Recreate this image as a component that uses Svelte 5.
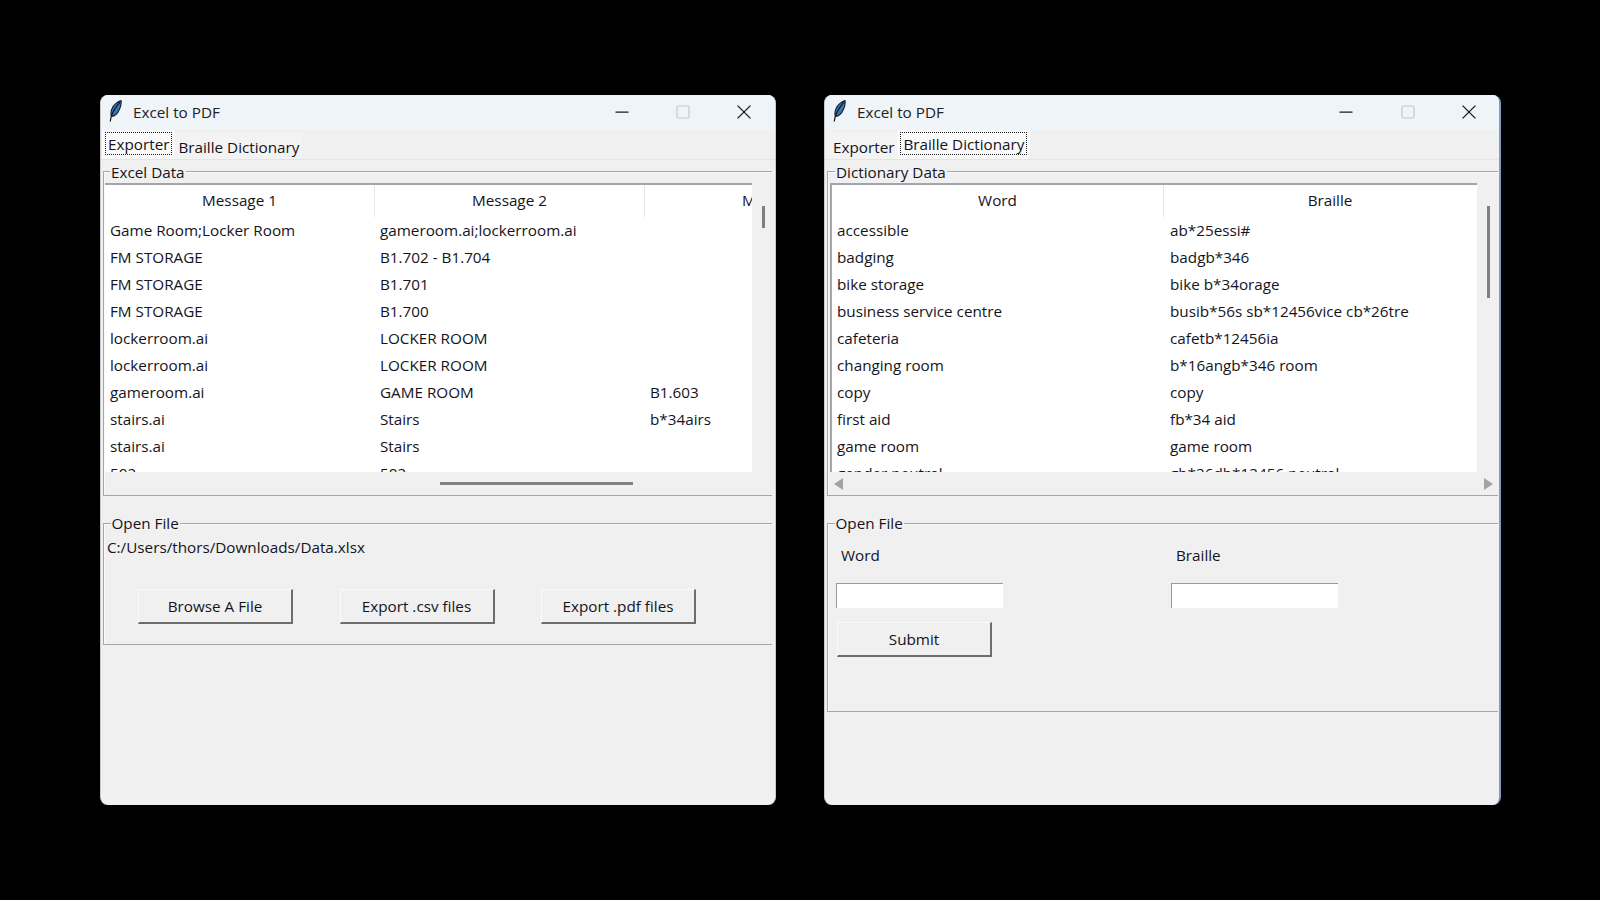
<script>
  const excelRows = [
    ['Game Room;Locker Room', 'gameroom.ai;lockerroom.ai', ''],
    ['FM STORAGE', 'B1.702 - B1.704', ''],
    ['FM STORAGE', 'B1.701', ''],
    ['FM STORAGE', 'B1.700', ''],
    ['lockerroom.ai', 'LOCKER ROOM', ''],
    ['lockerroom.ai', 'LOCKER ROOM', ''],
    ['gameroom.ai', 'GAME ROOM', 'B1.603'],
    ['stairs.ai', 'Stairs', 'b*34airs'],
    ['stairs.ai', 'Stairs', ''],
    ['502', '502', '']
  ];
  const dictRows = [
    ['accessible', 'ab*25essi#'],
    ['badging', 'badgb*346'],
    ['bike storage', 'bike b*34orage'],
    ['business service centre', 'busib*56s sb*12456vice cb*26tre'],
    ['cafeteria', 'cafetb*12456ia'],
    ['changing room', 'b*16angb*346 room'],
    ['copy', 'copy'],
    ['first aid', 'fb*34 aid'],
    ['game room', 'game room'],
    ['gender neutral', 'gb*26db*12456 neutral']
  ];
  const excelCols = [
    { name: 'Message 1', width: 270 },
    { name: 'Message 2', width: 270 },
    { name: 'Message 3', width: 270 }
  ];
  const dictCols = [
    { name: 'Word', width: 332 },
    { name: 'Braille', width: 333 }
  ];
</script>

{#snippet titlebar()}
  <header class="titlebar">
    <svg class="feather" viewBox="0 0 16 22" aria-hidden="true">
      <path d="M2.2 21.5 C2.6 19.4 3 17.4 3.6 15.4" fill="none" stroke="#111" stroke-width="1.2" />
      <path d="M3.4 16.4 C2 12 4 6.4 8 3.4 C10 1.9 11.6 1 13 .6 C13.4 3 13 6 11.6 9 C10 12.8 7 16.2 3.4 16.4 Z" fill="#3a78bc" stroke="#131c28" stroke-width="1.1" />
      <path d="M3.6 15.8 C5.2 11 7.6 7 11.8 2.4" fill="none" stroke="#0c1622" stroke-width="1.3" />
    </svg>
    <span class="title">Excel to PDF</span>
    <div class="controls">
      <svg class="ctl min" viewBox="0 0 14 14" aria-hidden="true"><path d="M.5 7.2h13" stroke="#1a1a1a" stroke-width="1.3" /></svg>
      <svg class="ctl max" viewBox="0 0 14 14" aria-hidden="true"><rect x="1" y="1" width="12" height="12" rx="1.5" fill="none" stroke="#c6c8ca" stroke-width="1.2" /></svg>
      <svg class="ctl close" viewBox="0 0 14 14" aria-hidden="true"><path d="M.6.6l12.8 12.8M13.4.6L.6 13.4" stroke="#1a1a1a" stroke-width="1.3" /></svg>
    </div>
  </header>
{/snippet}

{#snippet tree(cols, rows)}
  <div class="tree">
    <div class="pane">
      <div class="head">
        {#each cols as c}
          <div class="hcell" style:width="{c.width}px">{c.name}</div>
        {/each}
      </div>
      {#each rows as r}
        <div class="row">
          {#each r as v, i}
            <div class="cell" style:width="{cols[i].width}px">{v}</div>
          {/each}
        </div>
      {/each}
    </div>
    <div class="vbar"><div class="vthumb"></div></div>
    <div class="hbar">
      <svg class="arrow" viewBox="0 0 9 12" aria-hidden="true"><path d="M9 0v12L0 6z" fill="#a3a3a3" /></svg>
      <div class="hthumb"></div>
      <svg class="arrow" viewBox="0 0 9 12" aria-hidden="true"><path d="M0 0v12l9-6z" fill="#a3a3a3" /></svg>
    </div>
  </div>
{/snippet}

<main class="stage">
  <section class="win w1">
    {@render titlebar()}
    <nav class="tabs">
      <div class="tab selected"><span class="focus">Exporter</span></div>
      <div class="tab">Braille Dictionary</div>
    </nav>
    <div class="panel">
      <fieldset class="frame data">
        <legend>Excel Data</legend>
        {@render tree(excelCols, excelRows)}
      </fieldset>
      <fieldset class="frame open">
        <legend>Open File</legend>
        <p class="path">C:/Users/thors/Downloads/Data.xlsx</p>
        <div class="actions">
          <button type="button">Browse A File</button>
          <button type="button">Export .csv files</button>
          <button type="button">Export .pdf files</button>
        </div>
      </fieldset>
    </div>
  </section>

  <section class="win w2">
    {@render titlebar()}
    <nav class="tabs">
      <div class="tab">Exporter</div>
      <div class="tab selected"><span class="focus">Braille Dictionary</span></div>
    </nav>
    <div class="panel">
      <fieldset class="frame data">
        <legend>Dictionary Data</legend>
        {@render tree(dictCols, dictRows)}
      </fieldset>
      <fieldset class="frame open">
        <legend>Open File</legend>
        <div class="form">
          <label>
            <span>Word</span>
            <input type="text" />
          </label>
          <label>
            <span>Braille</span>
            <input type="text" />
          </label>
        </div>
        <button type="button">Submit</button>
      </fieldset>
    </div>
  </section>
</main>

<style>
  :global(body) {
    margin: 0;
    background: #000;
  }
  .stage {
    display: flex;
    gap: 48px;
    padding: 95px 0 0 100px;
    height: 805px;
    box-sizing: border-box;
    font-family: "Open Sans", "Noto Sans", sans-serif;
    font-size: 15.25px;
    color: #14141c;
  }
  .win {
    width: 676px;
    height: 710px;
    box-sizing: border-box;
    background: #f0f0f0;
    border-radius: 8px;
    overflow: hidden;
    display: flex;
    flex-direction: column;
    border-left: 1px solid #c9c9c9;
    border-right: 1px solid #c9c9c9;
  }
  .w2 {
    width: 677px;
    border-right: 2px solid #7e9cc4;
  }

  .titlebar {
    height: 35px;
    flex: none;
    background: #eff4f9;
    display: flex;
    align-items: center;
    padding-left: 7px;
  }
  .feather {
    width: 16px;
    height: 22px;
    margin-top: -3px;
  }
  .title {
    margin-left: 9px;
    margin-top: -1px;
    color: #222;
  }
  .controls {
    margin-left: auto;
    display: flex;
    align-items: center;
    gap: 47px;
    padding-right: 24px;
    margin-top: -2px;
  }
  .w2 .controls {
    gap: 47.5px;
    padding-right: 23px;
  }
  .ctl {
    width: 14px;
    height: 14px;
    display: block;
  }

  .tabs {
    height: 30px;
    flex: none;
    display: flex;
    align-items: flex-end;
    padding-left: 1px;
    box-sizing: border-box;
    border-bottom: 1px solid #e4e4e4;
  }
  .w2 .tabs {
    padding-left: 5px;
  }
  .tab {
    height: 27px;
    padding: 3px 3px 0;
    display: flex;
    align-items: center;
    box-sizing: border-box;
    background: #f3f3f3;
    white-space: nowrap;
  }
  .tab.selected {
    height: 29px;
    background: #fafafa;
    padding: 2px 3px 4px;
    align-items: stretch;
  }
  .focus {
    border: 1px dotted #222;
    padding: 1px 2px 0;
    display: flex;
    align-items: center;
  }

  .panel {
    flex: 1;
    padding: 1px 3px 0 2px;
    display: flex;
    flex-direction: column;
    gap: 17px;
  }
  .w2 .panel {
    padding: 1px 1px 0 2px;
  }
  .frame {
    margin: 0;
    padding: 0;
    min-width: 0;
    border: 0 solid #a6a6a6;
    border-width: 1.5px 0 1.5px 1.5px;
    box-shadow: inset 0 1px 0 #fafafa, inset 1px 0 0 #fafafa;
  }
  legend {
    margin-left: 5px;
    padding: 0 1px;
    line-height: 23px;
    height: 21px;
  }
  .open legend {
    margin-left: 6.5px;
    line-height: 21px;
  }
  .data {
    padding: 1px 0 0 1px;
  }
  .w2 .data {
    padding-left: 2px;
  }

  .tree {
    display: grid;
    grid-template-columns: 647px 20px;
    grid-template-rows: 289px 23px;
  }
  .pane {
    background: #fff;
    overflow: hidden;
    border-top: 2px solid #a2a6aa;
    box-sizing: border-box;
  }
  .w2 .pane {
    border-left: 2px solid #a2a6aa;
  }
  .head, .row {
    display: flex;
    width: max-content;
  }
  .head {
    height: 32px;
  }
  .hcell {
    box-sizing: border-box;
    text-align: center;
    line-height: 31px;
    border-right: 1px solid #e6e6e6;
    flex: none;
  }
  .row {
    height: 27px;
  }
  .cell {
    box-sizing: border-box;
    padding-left: 5px;
    line-height: 27px;
    flex: none;
    white-space: nowrap;
  }
  .w2 .cell:nth-child(2) {
    padding-left: 6px;
  }
  .vbar {
    padding: 23px 0 0 10px;
    box-sizing: border-box;
  }
  .vthumb {
    width: 3px;
    height: 22px;
    background: #7f7f7f;
  }
  .w2 .vthumb {
    height: 92px;
  }
  .hbar {
    grid-column: 1 / -1;
    display: flex;
    align-items: center;
    padding: 0 4px;
    box-sizing: border-box;
  }
  .arrow {
    width: 9px;
    height: 12px;
    display: block;
    flex: none;
  }
  .w1 .arrow {
    visibility: hidden;
  }
  .hthumb {
    flex: none;
    width: 193px;
    height: 3px;
    background: #808080;
    margin-left: 322px;
    margin-right: 125px;
  }
  .w2 .hthumb {
    visibility: hidden;
    width: 0;
    margin: 0 auto;
  }

  .w1 .open {
    height: 132px;
    box-sizing: border-box;
  }
  .w2 .open {
    height: 199px;
    box-sizing: border-box;
  }
  .path {
    margin: 2px 0 0 3px;
    line-height: 23px;
  }
  .actions {
    display: flex;
    gap: 46.5px;
    margin: 30px 0 0 34px;
  }
  button {
    width: 155px;
    height: 35px;
    box-sizing: border-box;
    font: inherit;
    color: inherit;
    background: #f0f0f0;
    border: 0 solid;
    border-color: #fafafa #6d6d6d #6d6d6d #fafafa;
    border-width: 1px 2px 2px 1px;
    padding: 0;
  }
  .form {
    display: flex;
    margin: 9px 0 0 8px;
    gap: 168px;
  }
  .form label {
    display: flex;
    flex-direction: column;
    width: 167px;
  }
  .form span {
    margin-left: 5px;
    line-height: 24px;
  }
  input {
    margin-top: 16px;
    width: 167px;
    height: 25px;
    box-sizing: border-box;
    border: 0 solid #999;
    border-width: 1.5px 0 0 1.5px;
    background: #fff;
    padding: 0;
    outline: none;
  }
  .open > button {
    margin: 14px 0 0 9px;
  }
</style>
